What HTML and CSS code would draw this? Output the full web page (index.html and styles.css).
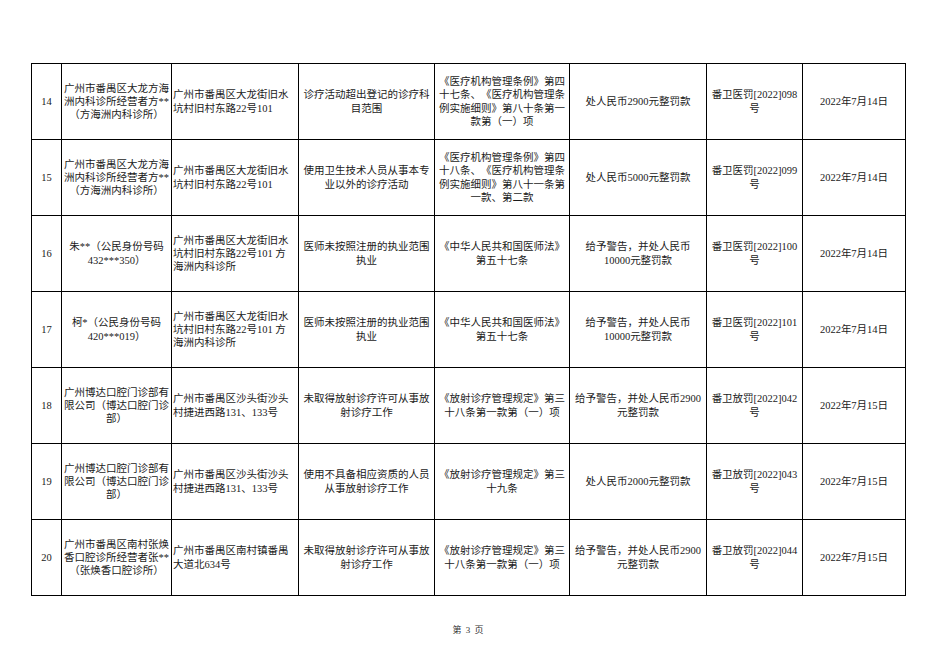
FILE: index.html
```html
<!DOCTYPE html>
<html lang="zh-CN">
<head>
<meta charset="utf-8">
<link rel="stylesheet" href="styles.css">
</head>
<body>
<div class="page">
<table class="grid">
<colgroup>
<col class="c1"><col class="c2"><col class="c3"><col class="c4"><col class="c5"><col class="c6"><col class="c7"><col class="c8">
</colgroup>
<tbody>
<tr>
<td class="ctr">14</td>
<td class="ctr">广州市番禺区大龙方海洲内科诊所经营者方**（方海洲内科诊所）</td>
<td class="lft">广州市番禺区大龙街旧水坑村旧村东路22号101</td>
<td class="ctr">诊疗活动超出登记的诊疗科目范围</td>
<td class="ctr">《医疗机构管理条例》第四十七条、《医疗机构管理条例实施细则》第八十条第一款第（一）项</td>
<td class="ctr">处人民币2900元整罚款</td>
<td class="ctr">番卫医罚[2022]098号</td>
<td class="ctr">2022年7月14日</td>
</tr>
<tr>
<td class="ctr">15</td>
<td class="ctr">广州市番禺区大龙方海洲内科诊所经营者方**（方海洲内科诊所）</td>
<td class="lft">广州市番禺区大龙街旧水坑村旧村东路22号101</td>
<td class="ctr">使用卫生技术人员从事本专业以外的诊疗活动</td>
<td class="ctr">《医疗机构管理条例》第四十八条、《医疗机构管理条例实施细则》第八十一条第一款、第二款</td>
<td class="ctr">处人民币5000元整罚款</td>
<td class="ctr">番卫医罚[2022]099号</td>
<td class="ctr">2022年7月14日</td>
</tr>
<tr>
<td class="ctr">16</td>
<td class="ctr">朱**（公民身份号码432***350）</td>
<td class="lft">广州市番禺区大龙街旧水坑村旧村东路22号101 方<br>海洲内科诊所</td>
<td class="ctr">医师未按照注册的执业范围执业</td>
<td class="ctr">《中华人民共和国医师法》第五十七条</td>
<td class="ctr">给予警告，并处人民币<br>10000元整罚款</td>
<td class="ctr">番卫医罚[2022]100号</td>
<td class="ctr">2022年7月14日</td>
</tr>
<tr>
<td class="ctr">17</td>
<td class="ctr">柯*（公民身份号码420***019）</td>
<td class="lft">广州市番禺区大龙街旧水坑村旧村东路22号101 方<br>海洲内科诊所</td>
<td class="ctr">医师未按照注册的执业范围执业</td>
<td class="ctr">《中华人民共和国医师法》第五十七条</td>
<td class="ctr">给予警告，并处人民币<br>10000元整罚款</td>
<td class="ctr">番卫医罚[2022]101号</td>
<td class="ctr">2022年7月14日</td>
</tr>
<tr>
<td class="ctr">18</td>
<td class="ctr">广州博达口腔门诊部有限公司（博达口腔门诊部）</td>
<td class="lft">广州市番禺区沙头街沙头村捷进西路131、133号</td>
<td class="ctr">未取得放射诊疗许可从事放射诊疗工作</td>
<td class="ctr">《放射诊疗管理规定》第三十八条第一款第（一）项</td>
<td class="ctr">给予警告，并处人民币2900元整罚款</td>
<td class="ctr">番卫放罚[2022]042号</td>
<td class="ctr">2022年7月15日</td>
</tr>
<tr>
<td class="ctr">19</td>
<td class="ctr">广州博达口腔门诊部有限公司（博达口腔门诊部）</td>
<td class="lft">广州市番禺区沙头街沙头村捷进西路131、133号</td>
<td class="ctr">使用不具备相应资质的人员从事放射诊疗工作</td>
<td class="ctr">《放射诊疗管理规定》第三十九条</td>
<td class="ctr">处人民币2000元整罚款</td>
<td class="ctr">番卫放罚[2022]043号</td>
<td class="ctr">2022年7月15日</td>
</tr>
<tr>
<td class="ctr">20</td>
<td class="ctr">广州市番禺区南村张焕香口腔诊所经营者张**（张焕香口腔诊所）</td>
<td class="lft">广州市番禺区南村镇番禺大道北634号</td>
<td class="ctr">未取得放射诊疗许可从事放射诊疗工作</td>
<td class="ctr">《放射诊疗管理规定》第三十八条第一款第（一）项</td>
<td class="ctr">给予警告，并处人民币2900元整罚款</td>
<td class="ctr">番卫放罚[2022]044号</td>
<td class="ctr">2022年7月15日</td>
</tr>
</tbody>
</table>
<div class="footer">第 3 页</div>
</div>
</body>
</html>
```

FILE: styles.css
```css
html, body {
  margin: 0;
  padding: 0;
  background: #ffffff;
}
.page {
  padding: 63px 0 0 31px;
  font-family: "Liberation Serif", "Noto Sans CJK SC", serif;
  color: #1a1a1a;
  text-spacing-trim: space-all;
}
.grid {
  border-collapse: collapse;
  table-layout: fixed;
  width: 874px;
}
.c1 { width: 30px; }
.c2 { width: 110px; }
.c3 { width: 127px; }
.c4 { width: 136px; }
.c5 { width: 135px; }
.c6 { width: 137px; }
.c7 { width: 96px; }
.c8 { width: 103px; }
.grid td {
  border: 1px solid #000;
  height: 75px;
  padding: 0 1px;
  font-size: 10.5px;
  line-height: 13.3px;
  vertical-align: middle;
  word-break: normal;
  overflow-wrap: break-word;
}
.ctr { text-align: center; }
.lft { text-align: left; padding-left: 2px; }
.footer {
  width: 874px;
  margin-top: 27px;
  text-align: center;
  font-size: 9px;
  word-spacing: 2px;
  color: #333;
}
```
